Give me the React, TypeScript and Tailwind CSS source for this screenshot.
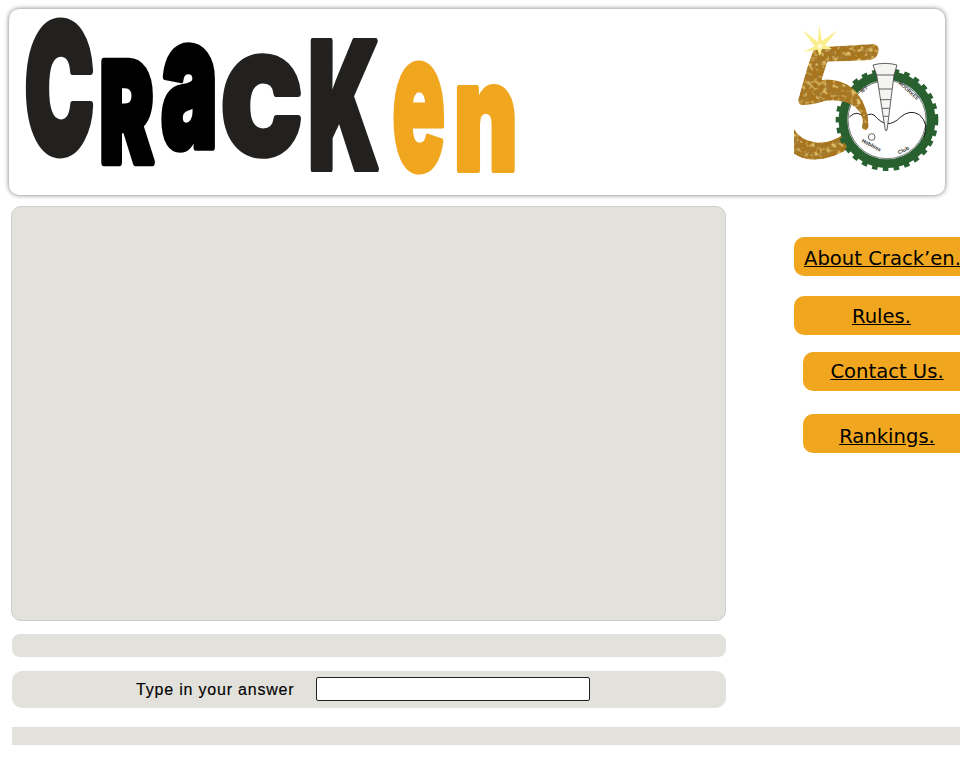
function Letter({ x, y, sx, sy, fill, sw = 7, children }: { x: number; y: number; sx: number; sy: number; fill: string; sw?: number; children: string }) {
  return (
    <text
      transform={`translate(${x} ${y}) scale(${sx} ${sy})`}
      fill={fill}
      stroke={fill}
      strokeWidth={sw}
      strokeLinejoin="round"
      vectorEffect="non-scaling-stroke"
      fontSize={100}
      className="font-['Inter'] font-black"
    >
      {children}
    </text>
  );
}

function Logo() {
  return (
    <svg width="510" height="170" viewBox="20 12 510 170" aria-label="Crack'en" className="overflow-visible">
      <Letter x={25} y={152} sx={0.92} sy={1.76} fill="#22211f">C</Letter>
      <Letter x={100} y={162} sx={0.8} sy={1.38} fill="#000000">R</Letter>
      <Letter x={161} y={147} sx={0.95} sy={1.82} fill="#000000" sw={6}>a</Letter>
      <Letter x={222} y={154} sx={1.06} sy={1.32} fill="#22211f">C</Letter>
      <Letter x={308} y={169} sx={0.94} sy={1.76} fill="#22211f" sw={5}>K</Letter>
      <Letter x={392} y={170} sx={0.88} sy={1.94} fill="#f0a71f" sw={4}>e</Letter>
      <Letter x={454} y={170} sx={0.98} sy={1.5} fill="#f0a71f" sw={5}>n</Letter>
    </svg>
  );
}

function Badge() {
  return (
    <svg width="150" height="150" viewBox="60 70 450 450">
      <defs>
        <filter id="gold" x="0" y="0" width="100%" height="100%">
          <feTurbulence type="fractalNoise" baseFrequency="0.055" numOctaves="3" seed="4" result="n1" />
          <feColorMatrix in="n1" values="0 0 0 0 0.36  0 0 0 0 0.2  0 0 0 0 0.03  3 0 0 0 -1.3" result="dark" />
          <feTurbulence type="fractalNoise" baseFrequency="0.07" numOctaves="2" seed="11" result="n2" />
          <feColorMatrix in="n2" values="0 0 0 0 0.9  0 0 0 0 0.66  0 0 0 0 0.18  2.6 0 0 0 -1.35" result="light" />
          <feMerge result="tex">
            <feMergeNode in="SourceGraphic" />
            <feMergeNode in="dark" />
            <feMergeNode in="light" />
          </feMerge>
          <feComposite in="tex" in2="SourceGraphic" operator="in" />
        </filter>
      </defs>

      {/* tail of the 5 goes behind the gear */}
      <path
        d="M72 388 Q90 420 135 428 Q185 432 225 400 L245 440 Q190 482 125 480 Q95 478 72 462 Z"
        fill="#a8741e"
        filter="url(#gold)"
      />

      <circle cx="351" cy="360" r="145" fill="none" stroke="#28602f" strokeWidth="18" strokeDasharray="16.5 15.4" />
      <circle cx="351" cy="360" r="132" fill="white" stroke="#28602f" strokeWidth="26" />
      <circle cx="351" cy="360" r="117" fill="white" stroke="#333" strokeWidth="2" />

      <path
        d="M238 352 Q262 328 282 355 Q296 338 312 346 Q335 372 352 372 Q372 372 392 352 Q420 328 448 345 Q478 372 462 412"
        fill="none"
        stroke="#222"
        strokeWidth="3"
      />
      <circle cx="305" cy="412" r="10" fill="white" stroke="#444" strokeWidth="2.5" />

      {/* drill */}
      <path d="M309 196 Q345 186 381 196 L372 226 L351 392 L346 392 L320 226 Z" fill="#f4f4f2" stroke="#444" strokeWidth="2.5" />
      <path d="M320 226 H372 M326 268 H366 M331 300 H362 M336 326 H358 M340 350 H355" stroke="#444" strokeWidth="2.5" fill="none" />

      <text x="276" y="280" fontSize="15" fontWeight="700" fill="#333" transform="rotate(-36 276 280)" className="font-['Liberation_Sans']">
        IET
      </text>
      <text x="385" y="252" fontSize="15" fontWeight="700" fill="#333" transform="rotate(42 385 252)" className="font-['Liberation_Sans']">
        ROORKEE
      </text>
      <text x="274" y="426" fontSize="16" fontWeight="700" fill="#333" transform="rotate(28 274 426)" className="font-['Liberation_Sans']">
        Hobbies
      </text>
      <text x="386" y="464" fontSize="16" fontWeight="700" fill="#333" transform="rotate(-24 386 464)" className="font-['Liberation_Sans']">
        Club
      </text>

      {/* top of the 5, runs over the gear and drips */}
      <path
        d="M140 143 L312 133 Q330 136 325 160 Q318 180 298 182 L172 186 L155 240 Q225 235 262 280 Q296 325 296 380 Q292 394 284 390 Q272 388 278 370 Q280 345 255 322 Q220 298 165 304 Q125 318 92 316 Q82 312 86 296 Q110 205 125 165 Q130 148 140 143 Z"
        fill="#a8741e"
        filter="url(#gold)"
      />

      {/* sparkle */}
      <path
        d="M148 76 L156 124 L202 92 L166 136 L186 148 L156 148 L150 168 L142 150 L100 156 L134 140 L98 92 L143 126 Z"
        fill="#fbee8c"
      />
      <circle cx="150" cy="140" r="8" fill="#fff8c8" />
    </svg>
  );
}

export default function App() {
  return (
    <div className="relative w-[960px] h-[768px] overflow-hidden bg-white font-['Liberation_Sans',sans-serif] text-black">
      {/* header */}
      <header className="ml-[9px] mt-[9px] flex h-[186px] w-[936px] items-start justify-between rounded-[10px] bg-white pl-[11px] pr-[5px] pt-[3px] shadow-[0_0_5px_rgba(0,0,0,0.55)]">
        <Logo />
        <div className="pt-[11px]">
          <Badge />
        </div>
      </header>

      <div className="flex items-start">
        {/* puzzle column */}
        <main className="ml-[11px] mt-[11px] flex w-[715px] shrink-0 flex-col">
          <div className="h-[415px] rounded-[10px] border border-[#cfcfca] bg-[#e2e1dc]"></div>
          <div className="ml-px mt-[13px] h-[23px] rounded-[8px] bg-[#e2e1dc]"></div>
          <div className="ml-px mt-[14px] flex h-[37px] items-center rounded-[10px] bg-[#e2e1dc] pl-[124px]">
            <label className="text-[16px] tracking-[0.8px] [-webkit-text-stroke:0.15px_black]">Type in your answer</label>
            <input type="text" className="mb-[2px] ml-[22px] h-[24px] w-[274px] rounded-[2px] border border-[#222] bg-white" />
          </div>
        </main>

        {/* side nav */}
        <nav className="ml-[68px] mt-[42px] flex w-[170px] shrink-0 flex-col font-['DejaVu_Sans',sans-serif] text-[19.6px] leading-none">
          <a href="#" className="flex h-[39px] w-[170px] items-center whitespace-nowrap rounded-l-[10px] bg-[#f0a71f] pl-[10px] pt-[4px] underline">
            About Crack’en.
          </a>
          <a href="#" className="mt-[20px] flex h-[39px] w-[175px] items-center justify-center rounded-l-[10px] bg-[#f0a71f] pt-[2px] underline">
            Rules.
          </a>
          <a href="#" className="ml-[9px] mt-[17px] flex h-[39px] w-[168px] items-center justify-center rounded-l-[10px] bg-[#f0a71f] underline">
            Contact Us.
          </a>
          <a href="#" className="ml-[9px] mt-[23px] flex h-[39px] w-[168px] items-center justify-center rounded-l-[10px] bg-[#f0a71f] pt-[6px] underline">
            Rankings.
          </a>
        </nav>
      </div>

      {/* footer strip */}
      <div className="ml-[12px] mt-[19px] h-[18px] bg-[#e2e1dc]"></div>
    </div>
  );
}
